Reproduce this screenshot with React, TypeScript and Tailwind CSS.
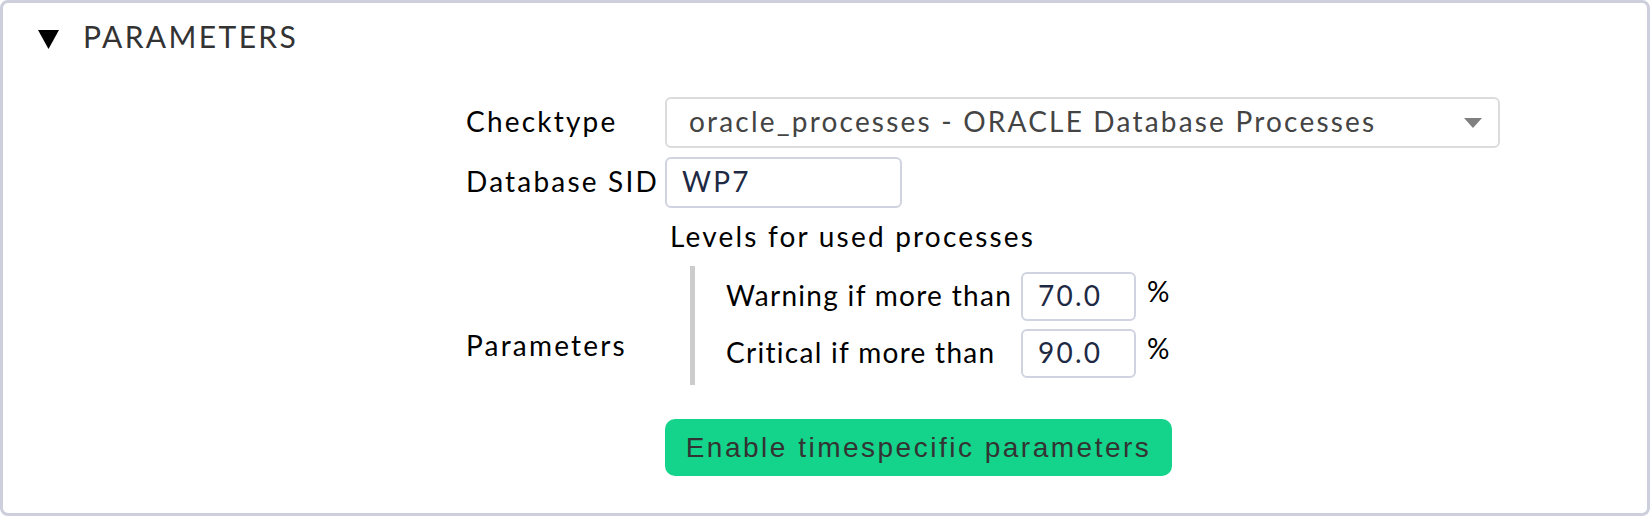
const levels = [
  { label: 'Warning if more than', value: '70.0' },
  { label: 'Critical if more than', value: '90.0' },
];

export default function App() {
  return (
    <div className="w-[1650px] h-[516px] bg-white font-['Lato',sans-serif]">
      <div className="h-full border-[3px] border-[#cdd0dc] rounded-[8px] flex flex-col">
        {/* Header */}
        <div className="h-[66px] flex items-center pl-[35px]">
          <svg width="21" height="19" viewBox="0 0 21 19" className="mt-[6px]">
            <polygon points="0,0 21,0 10.5,19" fill="#000000" />
          </svg>
          <span className="ml-[24px] text-[30px] tracking-[2.4px] text-[#333333] leading-none">
            PARAMETERS
          </span>
        </div>

        {/* Form */}
        <div className="mt-[28px] pl-[463px] grid grid-cols-[199px_1fr] gap-y-[9px] text-[28px] tracking-[2.2px] text-black">
          <div className="self-center leading-none pb-[4px]">Checktype</div>
          <div className="w-[835px] h-[51px] border-2 border-[#dcdcdc] rounded-[6px] flex items-center pl-[22px] pr-[16px] pb-[3px] text-[#444444]">
            <span className="flex-1 leading-none">oracle_processes - ORACLE Database Processes</span>
            <svg width="18" height="10" viewBox="0 0 18 10" className="mt-[3px]">
              <polygon points="0,0 18,0 9,10" fill="#808080" />
            </svg>
          </div>

          <div className="self-center leading-none whitespace-nowrap pb-[4px]">Database SID</div>
          <div className="w-[237px] h-[51px] border-2 border-[#d0d3e0] rounded-[6px] flex items-center pl-[15px] pb-[3px] text-[#1e2944]">
            WP7
          </div>

          <div className="self-center leading-none pb-[4px]">Parameters</div>
          <div className="flex flex-col items-start">
            <div className="h-[42px] leading-[38px] pl-[5px]">Levels for used processes</div>
            <div className="mt-[7px] ml-[25px] border-l-[5px] border-[#cccccc] pl-[31px] pt-[6px] pb-[7px]">
              <div className="grid grid-cols-[auto_auto_auto] gap-x-[9px] gap-y-[8px] items-center tracking-[1.3px]">
                {levels.map((l) => (
                  <>
                    <div key={l.label + 'l'} className="leading-none whitespace-nowrap pb-[4px]">{l.label}</div>
                    <div key={l.label + 'v'} className="w-[115px] h-[49px] border-2 border-[#d0d3e0] rounded-[6px] flex items-center pl-[15px] pb-[3px] text-[#1e2944] tracking-[2.2px]">
                      {l.value}
                    </div>
                    <div key={l.label + 'p'} className="ml-[2px] leading-none -mt-[12px]">%</div>
                  </>
                ))}
              </div>
            </div>
            <button className="mt-[34px] w-[507px] h-[57px] bg-[#14d38a] rounded-[10px] text-[#333333] text-[28px] tracking-[2.5px] font-['Liberation_Sans',Arial,sans-serif] flex items-center justify-center">
              Enable timespecific parameters
            </button>
          </div>
        </div>
      </div>
    </div>
  );
}
